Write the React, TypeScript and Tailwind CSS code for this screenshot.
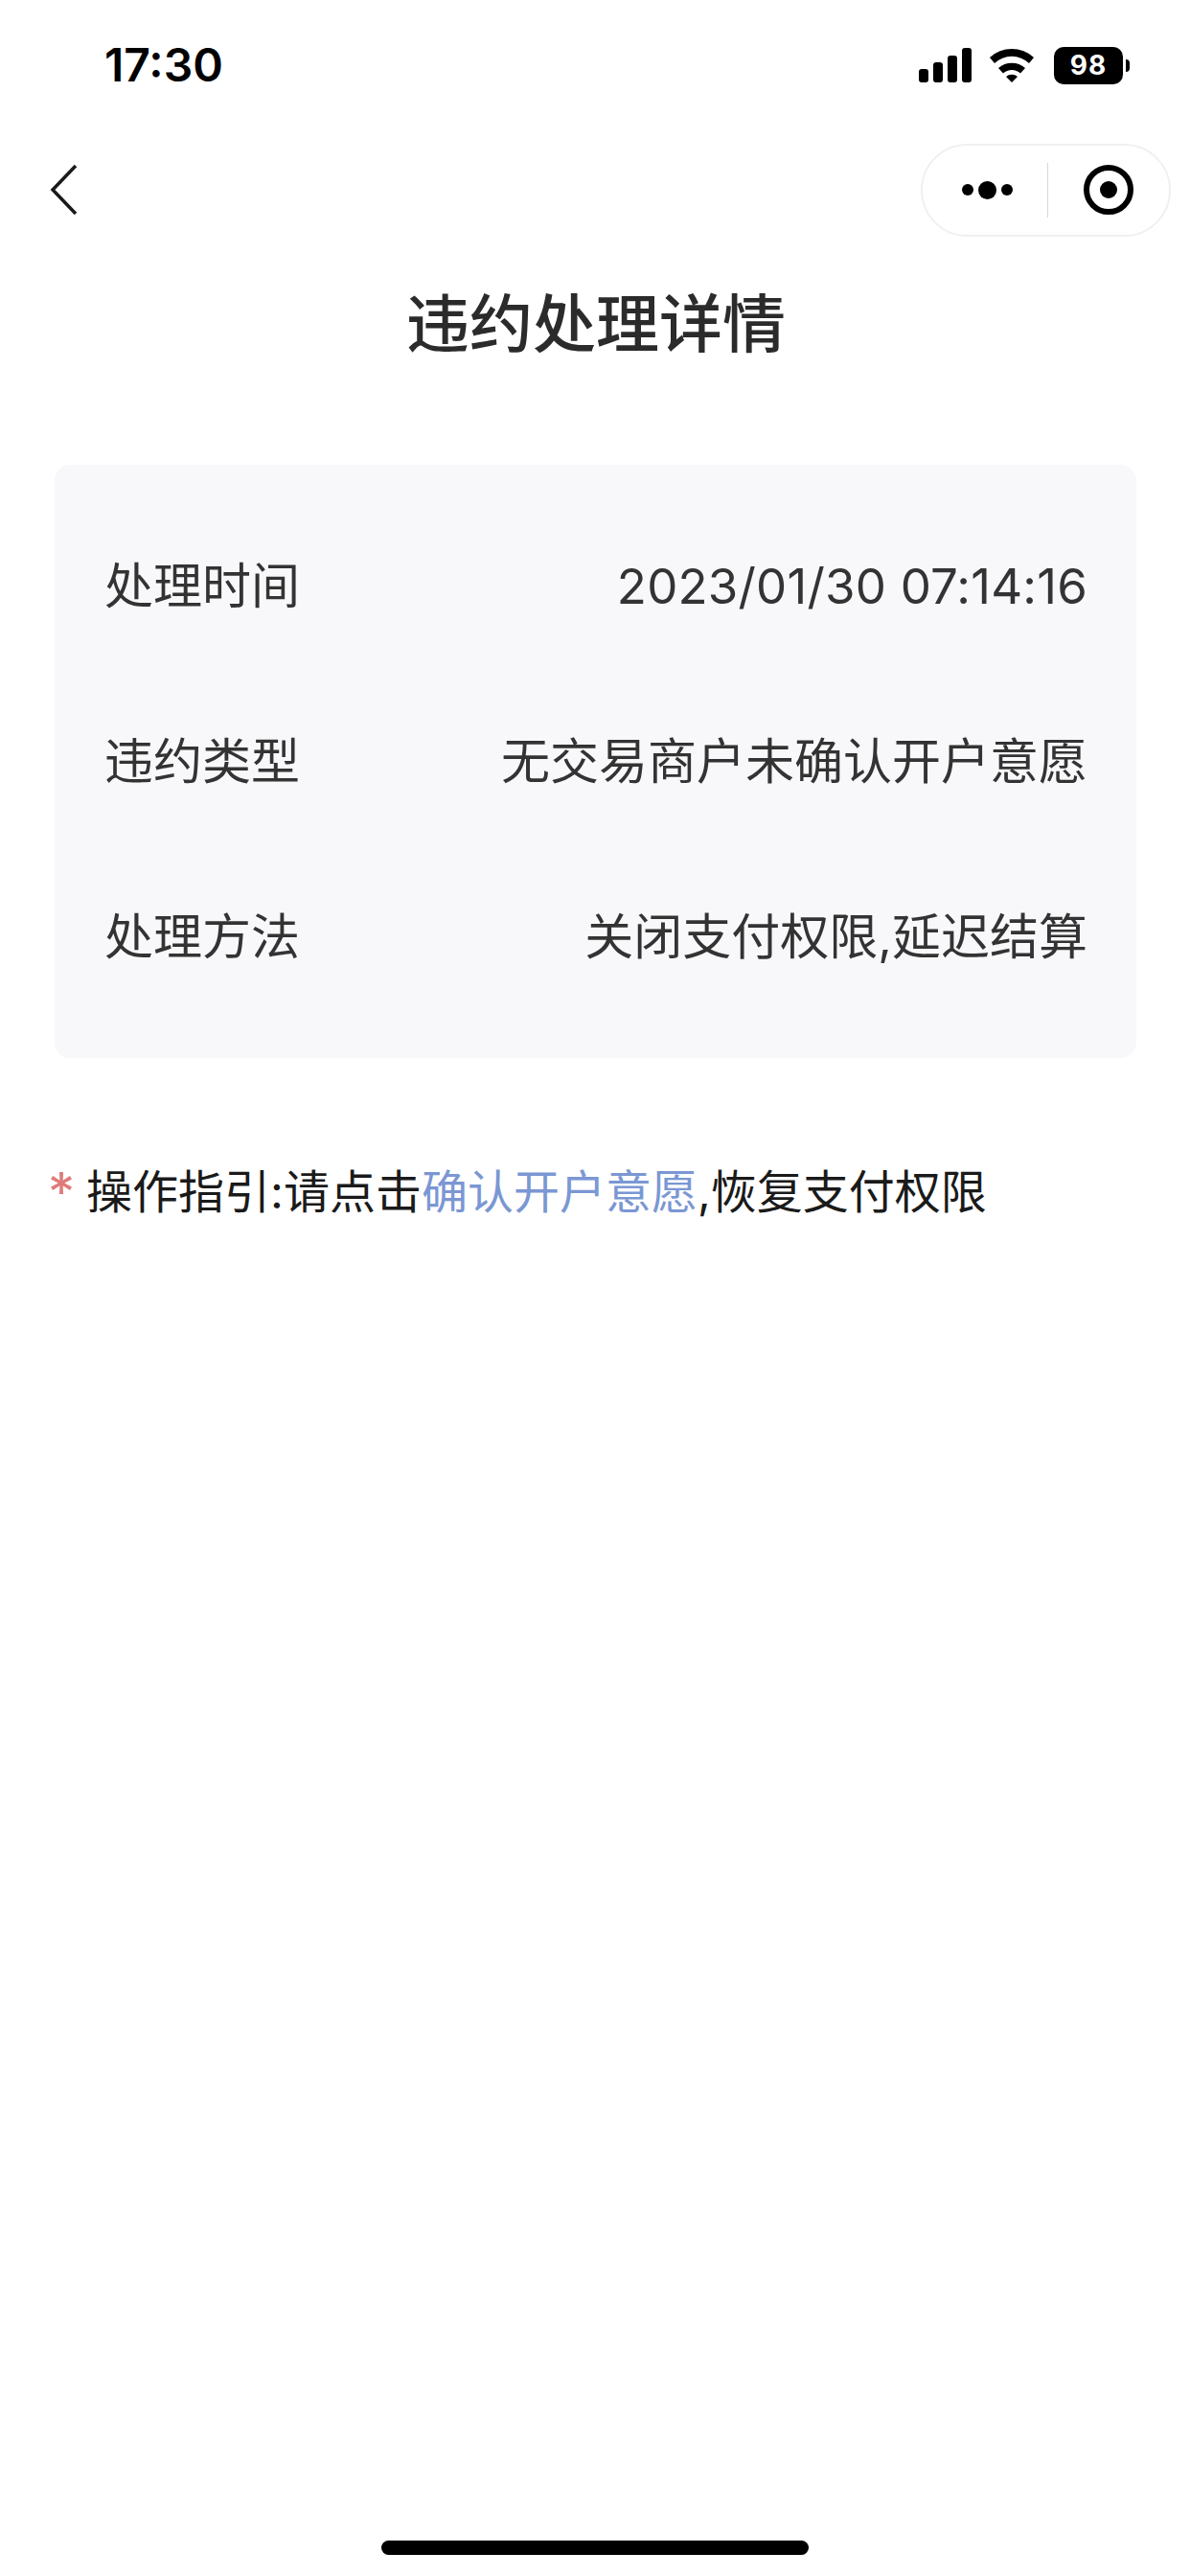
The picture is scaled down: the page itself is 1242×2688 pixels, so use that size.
const cjk = "font-['Inter','Noto_Sans_CJK_SC',sans-serif]";

function Row({ label, value, spaced }: { label: string; value: string; spaced?: boolean }) {
  return (
    <div className="flex h-[183px] items-center justify-between">
      <span className="text-[51px] leading-none text-[#333333]">{label}</span>
      <span className={`text-[51px] leading-none text-[#333333] ${spaced ? "tracking-[0.2px]" : ""}`}>{value}</span>
    </div>
  );
}

function StatusIcons() {
  return (
    <div className="flex items-center">
      <svg width="56" height="36" viewBox="0 0 56 36" className="mr-[17px]">
        <rect x="0" y="22" width="10" height="14" rx="3" fill="#000" />
        <rect x="15" y="15" width="10" height="21" rx="3" fill="#000" />
        <rect x="30" y="8" width="10" height="28" rx="3" fill="#000" />
        <rect x="45" y="0" width="10" height="36" rx="3" fill="#000" />
      </svg>
      <svg width="48" height="36" viewBox="0 0 48 36" className="mr-[20px]">
        <path d="M1 10 A34 34 0 0 1 47 10 L42 16 A26 26 0 0 0 6 16 Z" fill="#000" />
        <path d="M10 21 A21 21 0 0 1 38 21 L33 26.500 A13 13 0 0 0 15 26.500 Z" fill="#000" />
        <path d="M18 30 A9 9 0 0 1 30 30 L24 36 Z" fill="#000" />
      </svg>
      <div className="flex items-center">
        <div className="flex h-[39px] w-[72px] items-center justify-center rounded-[10px] bg-black font-['Inter',sans-serif] text-[28px] font-bold leading-none tracking-[1px] text-white">
          98
        </div>
        <div className="ml-[3px] h-[13px] w-[4px] rounded-r-full bg-black" />
      </div>
    </div>
  );
}

export default function App() {
  return (
    <div className={`min-h-[2688px] bg-white ${cjk} relative`}>
      <div className="flex h-[136px] items-center justify-between pl-[109px] pr-[63px]">
        <span className="font-['Inter',sans-serif] text-[48px] font-semibold leading-none text-black">17:30</span>
        <StatusIcons />
      </div>

      <div className="mt-[7px] flex h-[110px] items-center justify-between pl-[52px] pr-[20px]">
        <svg width="30" height="54" viewBox="0 0 30 54" fill="none">
          <path d="M27 2 L3 27 L27 52" stroke="#1a1a1a" strokeWidth="3.500" />
        </svg>
        <div className="flex h-[97px] w-[261px] items-center rounded-full border-2 border-[#f0f0f0] bg-white">
          <div className="flex w-[130px] items-center justify-center gap-[5px] pl-[4px]">
            <span className="size-[12px] rounded-full bg-black" />
            <span className="size-[19px] rounded-full bg-black" />
            <span className="size-[12px] rounded-full bg-black" />
          </div>
          <div className="h-[57px] w-px bg-[#d8d8d8]" />
          <div className="flex flex-1 items-center justify-center">
            <div className="flex size-[52px] items-center justify-center rounded-full border-[6px] border-black">
              <span className="size-[18px] rounded-full bg-black" />
            </div>
          </div>
        </div>
      </div>

      <h1 className="mt-[43px] pl-[2px] text-center text-[66px] font-medium leading-[84px] text-[#2b2b2b]">违约处理详情</h1>

      <div className="ml-[57px] mr-[56px] mt-[105px] rounded-[16px] bg-[#f8f8fb] pl-[52px] pr-[51px] py-[35px]">
        <Row label="处理时间" value="2023/01/30 07:14:16" spaced />
        <Row label="违约类型" value="无交易商户未确认开户意愿" />
        <Row label="处理方法" value="关闭支付权限,延迟结算" />
      </div>

      <div className="mt-[108px] flex items-center pl-[50px] text-[48px] leading-[64px] text-[#1a1a1a]">
        <span className="mr-[12px] text-[56px] leading-[64px] text-[#e07a7a]">*</span>
        <span>
          操作指引:请点击<span className="text-[#7b97d3]">确认开户意愿</span>,恢复支付权限
        </span>
      </div>

      <div className="absolute bottom-[22px] left-1/2 h-[15px] w-[446px] -translate-x-1/2 rounded-full bg-black" />
    </div>
  );
}
